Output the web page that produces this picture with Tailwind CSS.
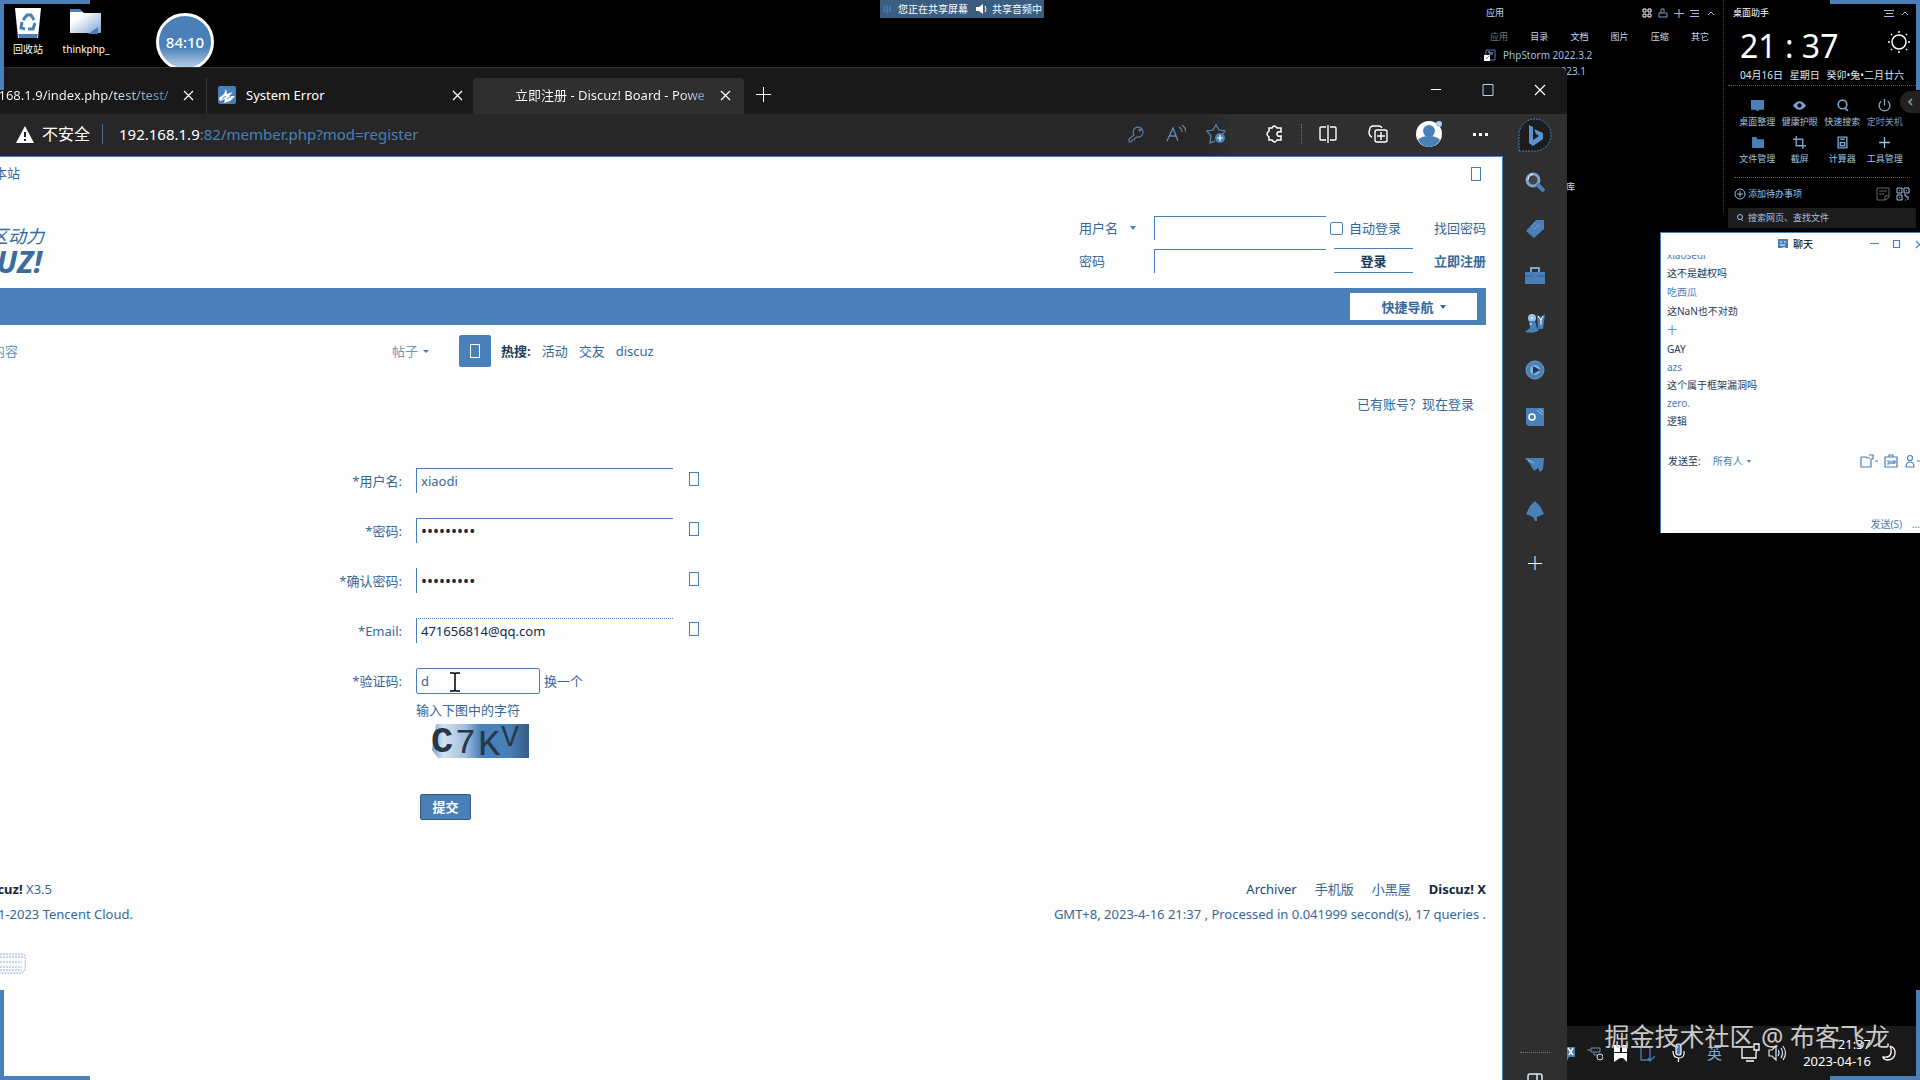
<!DOCTYPE html>
<html lang="zh-CN">

<head>
    <meta charset="UTF-8" />
    <title>立即注册 - Discuz! Board</title>
    <meta name="viewport" content="width=device-width, initial-scale=1.0" />
    <script src="https://cdn.jsdelivr.net/npm/@tailwindcss/browser@4"></script>
    <style>
        html {
            font-family: "Noto Sans", "Noto Sans CJK SC", sans-serif;
        }
    </style>
</head>

<body class="relative h-screen overflow-hidden bg-black text-[13px] leading-5 text-white">

    <!-- Desktop icons -->
    <div class="absolute left-2 top-[7px] flex gap-3 text-center text-[10px] leading-4">
        <a href="#" class="flex w-10 flex-col items-center">
            <svg class="h-8 w-7" viewBox="0 0 28 32">
                <path d="M1 1h26l-3 30H4z" fill="#fff" />
                <path d="M4 27h20l-1 4H5z" fill="#4a80b8" />
                <path d="M9 13l4-5h4l3 5M21 16l-2 6h-5M11 22l-4-1 1-6" fill="none" stroke="#4a80b8" stroke-width="3" />
            </svg>
            <span class="mt-[2px]">回收站</span>
        </a>
        <a href="#" class="flex w-[52px] flex-col items-center">
            <svg class="h-8 w-8" viewBox="0 0 32 32">
                <defs>
                    <linearGradient id="folder" x1="0" y1="0" x2="1" y2="1">
                        <stop offset=".3" stop-color="#fff" />
                        <stop offset="1" stop-color="#7ba3cd" />
                    </linearGradient>
                </defs>
                <path d="M0 3h10l4 3h17v20H0z" fill="url(#folder)" />
                <path d="M0 2h10l3 3H0zM28 20v7H18z" fill="#4a80b8" />
            </svg>
            <span class="mt-[2px]">thinkphp_</span>
        </a>
    </div>

    <!-- Meeting timer -->
    <div class="absolute left-[156px] top-[13px] flex h-[58px] w-[58px] items-center justify-center rounded-full border-3 border-white bg-linear-to-b from-[#4a80b8] from-60% to-[#b9cfe5] text-[15px] font-medium">
        84:10
    </div>

    <!-- Screen sharing status -->
    <div class="absolute left-[880px] top-0 flex h-[18px] w-[164px] items-center justify-center gap-1 bg-[#3b5d80] text-[10px] leading-4">
        <svg class="h-3 w-3" viewBox="0 0 12 12" stroke="#4a90d8" stroke-width="1"><path d="M2 3v6M5 2v8M8 3v6" /></svg>
        <span>您正在共享屏幕</span>
        <svg class="ml-1 h-3 w-3" viewBox="0 0 12 12" fill="#fff"><path d="M0 4h3l4-3v10l-4-3H0z" /><path d="M9 3q2 3 0 6" fill="none" stroke="#fff" /></svg>
        <span>共享音频中</span>
    </div>

    <!-- Launcher panel -->
    <section class="absolute right-[196px] top-0 flex h-[213px] w-[242px] flex-col border-r border-dotted border-[#444] pr-[6px] text-[9px] leading-4 text-[#c5d8ec]">
        <div class="mt-[5px] flex items-center justify-between pl-1">
            <span>应用</span>
            <div class="flex gap-1">
                <svg class="h-3 w-3" viewBox="0 0 12 12" fill="none" stroke="#fff"><path d="M2 2h3v3H2zM7 2h3v3H7zM2 7h3v3H2zM7 7h3v3H7z" /></svg>
                <svg class="h-3 w-3" viewBox="0 0 12 12" fill="none" stroke="#7ba3cd"><path d="M2 6h8v4H2zM4 6V2h3v3" /></svg>
                <svg class="h-3 w-3" viewBox="0 0 12 12" stroke="#9ec0e0"><path d="M6 2v9M1 6.500h10" /></svg>
                <svg class="h-3 w-3" viewBox="0 0 12 12" stroke="#9ec0e0"><path d="M1 3.500h9M3 6.500h7M1 9.500h9" /></svg>
                <svg class="h-3 w-3" viewBox="0 0 12 12" fill="none" stroke="#9ec0e0"><path d="M3 8l3-3 3 3" /></svg>
            </div>
        </div>
        <nav class="mt-2 flex justify-between pl-2 pr-2">
            <a href="#" class="text-[#777]">应用</a>
            <a href="#">目录</a>
            <a href="#">文档</a>
            <a href="#">图片</a>
            <a href="#">压缩</a>
            <a href="#">其它</a>
        </nav>
        <div class="mt-[2px] flex items-center gap-[7px] pl-[2px] text-[10px] text-[#9ec0e0]">
            <svg class="h-3 w-3" viewBox="0 0 12 12"><path d="M2 1h9v10H2z" fill="none" stroke="#4a80b8" /><path d="M4 3h2v3M8 3v3" stroke="#9ec0e0" /><path d="M0 6h6v6H0z" fill="#fff" /><path d="M2 10l3-3" stroke="#4a80b8" /></svg>
            <span>PhpStorm 2022.3.2</span>
        </div>
        <div class="w-[104px] text-right text-[10px] text-[#9ec0e0]">2023.1</div>
        <div class="mt-[100px] pl-[84px]">库</div>
    </section>

    <!-- Desktop assistant -->
    <section class="absolute right-1 top-0 flex w-[188px] flex-col text-[9px] leading-4 text-[#9ec0e0]">
        <div class="mt-[5px] flex items-center justify-between px-[5px]">
            <span class="text-white">桌面助手</span>
            <div class="flex gap-1">
                <svg class="h-3 w-3" viewBox="0 0 12 12" stroke="#9ec0e0"><path d="M1 3.500h10M3 6.500h7M1 9.500h10" /></svg>
                <svg class="h-3 w-3" viewBox="0 0 12 12" fill="none" stroke="#9ec0e0"><path d="M3 8l3-3 3 3" /></svg>
            </div>
        </div>
        <div class="mt-1 flex items-center justify-between pl-3 pr-[5px] text-white">
            <span class="text-[32px] leading-[42px]">21 : 37</span>
            <svg class="mb-2 h-6 w-6" viewBox="0 0 24 24" fill="none" stroke="#fff" stroke-width="1.500">
                <circle cx="12" cy="12" r="7" />
                <path d="M12 1v2M12 21v2M1 12h2M21 12h2M4 4l1 1M19 19l1 1M4 20l1-1M19 5l1-1" />
            </svg>
        </div>
        <div class="flex justify-between border-b border-dotted border-[#555] pb-[2px] pl-3 pr-3 text-[10px] text-[#dbe7f3]">
            <span>04月16日</span><span>星期日</span><span>癸卯•兔•二月廿六</span>
        </div>
        <div class="grid grid-cols-4 gap-y-[6px] pl-2 pr-[10px] pt-[13px] text-center">
            <a href="#" class="flex flex-col items-center gap-[2px] whitespace-nowrap text-[#9ec0e0]">
                <svg class="h-[13px] w-[13px]" viewBox="0 0 12 12"><path d="M0 1h12v9H7v1H5v-1H0z" fill="#4a80b8" /></svg>桌面整理
            </a>
            <a href="#" class="flex flex-col items-center gap-[2px] whitespace-nowrap text-[#9ec0e0]">
                <svg class="h-[13px] w-[13px]" viewBox="0 0 12 12"><path d="M0 6q6-8 12 0q-6 8-12 0" fill="#7ba3cd" /><circle cx="6" cy="6" r="2" fill="#000" /></svg>健康护眼
            </a>
            <a href="#" class="flex flex-col items-center gap-[2px] whitespace-nowrap text-[#9ec0e0]">
                <svg class="h-[13px] w-[13px]" viewBox="0 0 12 12" fill="none" stroke="#7ba3cd" stroke-width="1.500"><circle cx="6" cy="5" r="4" /><path d="M8 8l3 3" /></svg>快速搜索
            </a>
            <a href="#" class="flex flex-col items-center gap-[2px] whitespace-nowrap text-[#7f97b0]">
                <svg class="h-[13px] w-[13px]" viewBox="0 0 12 12" fill="none" stroke="#8da9c5" stroke-width="1.200"><path d="M3 2a5 5 0 1 0 6 0M6 0v6" /></svg>定时关机
            </a>
            <a href="#" class="flex flex-col items-center gap-[2px] whitespace-nowrap text-[#9ec0e0]">
                <svg class="h-[13px] w-[13px]" viewBox="0 0 12 12"><path d="M1 1h4l1 2h6v8H1z" fill="#4a80b8" /></svg>文件管理
            </a>
            <a href="#" class="flex flex-col items-center gap-[2px] whitespace-nowrap text-[#9ec0e0]">
                <svg class="h-[13px] w-[13px]" viewBox="0 0 12 12" fill="none" stroke="#7ba3cd" stroke-width="1.300"><path d="M3 0v9h9M0 3h9v9" /></svg>截屏
            </a>
            <a href="#" class="flex flex-col items-center gap-[2px] whitespace-nowrap text-[#9ec0e0]">
                <svg class="h-[13px] w-[13px]" viewBox="0 0 12 12" fill="none" stroke="#7ba3cd" stroke-width="1.300"><path d="M2 1h8v10H2zM4 3h4M4 6h4v3H4z" /></svg>计算器
            </a>
            <a href="#" class="flex flex-col items-center gap-[2px] whitespace-nowrap text-[#9ec0e0]">
                <svg class="h-[13px] w-[13px]" viewBox="0 0 12 12" stroke="#9ec0e0" stroke-width="1.200"><path d="M6 1v10M1 6h10" /></svg>工具管理
            </a>
        </div>
        <div class="mx-[6px] mt-[10px] flex items-center gap-[2px] border-t border-dotted border-[#555] pt-2">
            <svg class="h-3 w-3" viewBox="0 0 12 12" fill="none" stroke="#9ec0e0"><circle cx="6" cy="6" r="5" /><path d="M6 3v6M3 6h6" /></svg>
            <span class="flex-1">添加待办事项</span>
            <svg class="mr-1 h-[14px] w-[14px]" viewBox="0 0 14 14" fill="none" stroke="#666"><path d="M1 1h12v9l-3 3H1zM3 4h8M3 7h5M9 13V9h4" /></svg>
            <svg class="h-[14px] w-[14px]" viewBox="0 0 14 14" fill="none" stroke="#9ec0e0"><path d="M1 1h5v5H1zM8 1h5v5H8zM1 8h5v5H1zM8 8h2v2h3M9 13h1M12 11v2M3 3.500h1M10 3.500h1M3 10.500h1" /></svg>
        </div>
        <label class="mt-[6px] flex h-5 items-center gap-1 bg-[#1d1d1d] pl-2">
            <svg class="h-2 w-2" viewBox="0 0 8 8" fill="none" stroke="#9ec0e0"><circle cx="4" cy="3" r="2.500" /><path d="M5 5l2 2" /></svg>
            <input type="text" aria-label="搜索" placeholder="搜索网页、查找文件" class="w-36 outline-none placeholder:text-[#9ec0e0]" />
        </label>
    </section>
    <button aria-label="收起" class="absolute right-0 top-[91px] flex h-[22px] w-5 items-center justify-center rounded-l-full bg-[#222]">
        <svg class="h-2 w-2" viewBox="0 0 8 8" fill="none" stroke="#7ba3cd" stroke-width="1.500"><path d="M6 1L3 4l3 3" /></svg>
    </button>

    <!-- Chat window -->
    <section class="absolute right-0 top-[232px] h-[301px] w-[260px] overflow-hidden border-l border-t border-[#4a80b8] bg-[#fdfdfd] text-[10px] leading-[18px] text-[#1d3a58]">
        <header class="flex h-[22px] items-center">
            <svg class="ml-[117px] h-[10px] w-[10px]" viewBox="0 0 10 10"><path d="M0 0h10v9H8L6 8 4 9H0z" fill="#4a80b8" /><path d="M2 3h2M6 3h2M2 6h5" stroke="#fff" /></svg>
            <span class="ml-[5px] text-black">聊天</span>
            <svg class="ml-auto h-3 w-[50px] shrink-0" viewBox="0 0 50 12" fill="none" stroke="#4a80b8" stroke-width="1.200"><path d="M0 5.500h9M23.500 2.500h6v7h-6zM46 3l7 7M53 3l-7 7" /></svg>
        </header>
        <ul class="pl-[6px]">
            <li class="flex h-1 items-end overflow-hidden leading-2 text-[#4a80b8]">xiaosedi</li>
            <li class="mt-[5px]">这不是越权吗</li>
            <li class="mt-[1px] text-[#4a80b8]">吃西瓜</li>
            <li class="mt-[1px]">这NaN也不对劲</li>
            <li class="mt-[1px] text-[#4a80b8]">十</li>
            <li class="mt-[1px]">GAY</li>
            <li class="text-[#4a80b8]">azs</li>
            <li>这个属于框架漏洞吗</li>
            <li class="text-[#4a80b8]">zero.</li>
            <li>逻辑</li>
        </ul>
        <div class="mt-[22px] flex items-center pl-[7px]">
            <label for="sendTo">发送至:</label>
            <select id="sendTo" class="ml-3 appearance-none text-[#4a80b8]">
                <option>所有人</option>
            </select>
            <span class="ml-1 border-x-2 border-t-3 border-x-transparent border-t-[#4a80b8]"></span>
            <svg class="ml-auto h-[14px] w-[60px] shrink-0" viewBox="0 0 60 14" fill="none" stroke="#4a80b8" stroke-width="1.200">
                <path d="M1 3h5l1 1h3M11 6v7H1V3M9 1h4v4h-2v2M15 7h3" />
                <path d="M25 3h12v10H25zM29 3V1h4v2M27 7h2v3h-2M31 7v3M33 10V7h2v2h-2" />
                <circle cx="50" cy="4" r="2.500" /><path d="M46 13q0-5 4-5t4 5zM57 7h3" />
            </svg>
        </div>
        <div class="mt-[45px] flex justify-end gap-[10px] text-[#4a80b8]">
            <button>发送(S)</button><span>…</span>
        </div>
    </section>

    <!-- Browser window -->
    <div class="absolute bottom-0 left-0 right-[353px] top-[67px] flex flex-col overflow-hidden rounded-tr-lg border-t border-[#2f2f2f] bg-[#2f2f2f]">
        <div class="flex h-[46px] shrink-0 items-end bg-[#191919]">
            <div class="flex h-9 w-[206px] items-center justify-between pb-[2px] pr-[12px]">
                <span class="-ml-[5px] whitespace-nowrap bg-linear-to-r from-white from-60% to-[#4a80b8] bg-clip-text text-transparent">.168.1.9/index.php/test/test/</span>
                <button aria-label="关闭标签页"><svg class="h-[11px] w-[11px]" viewBox="0 0 11 11" stroke="#fff" stroke-width="1.200"><path d="M1 1l9 9M10 1l-9 9" /></svg></button>
            </div>
            <div class="flex h-9 w-[267px] items-center border-l border-[#3a3a3a] pb-[2px] pl-[11px] pr-[10px]">
                <svg class="h-[18px] w-[18px]" viewBox="0 0 18 18"><rect width="18" height="18" rx="2" fill="#4a80b8" /><path d="M1 12l5-4 2-5 1 5 6-2-4 4 6 0-5 5-6 2 1-4-5 2z" fill="#fff" /><path d="M4 13l4-3M9 13l4-3" stroke="#4a80b8" /></svg>
                <span class="ml-[10px] flex-1">System Error</span>
                <button aria-label="关闭标签页"><svg class="h-[11px] w-[11px]" viewBox="0 0 11 11" stroke="#fff" stroke-width="1.200"><path d="M1 1l9 9M10 1l-9 9" /></svg></button>
            </div>
            <div class="flex h-9 w-[271px] items-center rounded-t bg-[#2f2f2f] pb-[2px] pl-[42px] pr-[13px]">
                <span class="w-[194px] overflow-hidden whitespace-nowrap bg-linear-to-r from-white from-85% to-[#4a80b8] bg-clip-text text-transparent">立即注册 - Discuz! Board - Powe</span>
                <button aria-label="关闭标签页" class="ml-auto"><svg class="h-[11px] w-[11px]" viewBox="0 0 11 11" stroke="#fff" stroke-width="1.200"><path d="M1 1l9 9M10 1l-9 9" /></svg></button>
            </div>
            <button aria-label="新建标签页" class="mb-3 ml-3"><svg class="h-[15px] w-[15px]" viewBox="0 0 15 15" stroke="#fff"><path d="M7.500 0v15M0 7.500h15" /></svg></button>
            <div class="mb-[18px] ml-auto flex gap-10 pr-[21px]">
                <button aria-label="最小化"><svg class="h-3 w-3" viewBox="0 0 12 12" stroke="#fff"><path d="M1 5.500h10" /></svg></button>
                <button aria-label="最大化"><svg class="h-3 w-3" viewBox="0 0 12 12" fill="none" stroke="#b9d0e8"><path d="M1 .5h10v11H1z" /></svg></button>
                <button aria-label="关闭"><svg class="h-3 w-3" viewBox="0 0 12 12" stroke="#fff" stroke-width="1.200"><path d="M1 1l10 10M11 1L1 11" /></svg></button>
            </div>
        </div>

        <div class="flex min-h-0 flex-1">
            <div class="flex min-w-0 flex-1 flex-col">
                <!-- Address bar -->
                <div class="flex h-[42px] shrink-0 items-center bg-linear-to-r from-[#272727] from-80% to-[#2f2f2f] to-82% pb-[2px] pr-[14px] text-[15px]">
                    <svg class="ml-4 h-[17px] w-[18px]" viewBox="0 0 18 17"><path d="M9 0l9 17H0z" fill="#fff" /><path d="M9 6v5M9 13v2" stroke="#222" stroke-width="2" /></svg>
                    <span class="ml-2 text-[16px]">不安全</span>
                    <span class="ml-3 h-5 w-px bg-[#4a6f96]"></span>
                    <span class="ml-4 flex-1">192.168.1.9<span class="text-[#4a80b8]">:82/member.php?mod=register</span></span>
                    <svg class="h-5 w-5" viewBox="0 0 20 20" fill="none" stroke="#5f7f9f" stroke-width="1.200"><path d="M8 11a5 5 0 1 1 3 2l-2 1-1 2H6l-1 2H3v-3z" /><circle cx="14" cy="6" r="1" /></svg>
                    <svg class="ml-5 h-5 w-5" viewBox="0 0 20 20" fill="none" stroke="#6389b0" stroke-width="1.300"><path d="M1 17L7 4l5 13M3 12h7M13 3q3 2 3 5M16 1q4 3 4 7" /></svg>
                    <svg class="ml-5 h-5 w-5" viewBox="0 0 20 20" fill="none" stroke="#5b8bbd" stroke-width="1.200"><path d="M9 17l-5 2 1-7-4-5 6-1 3-5 3 5 6 1-2 3" /><circle cx="14" cy="14" r="5" fill="#4a80b8" stroke="none" /><path d="M14 11v6M11 14h6" stroke="#fff" /></svg>
                    <svg class="ml-[39px] h-5 w-5" viewBox="0 0 20 20" fill="none" stroke="#fff" stroke-width="1.500"><path d="M4 4h3q2-4 5 0h4v4q-4-1-4 2t4 2v4h-4q-2 4-5 0H4v-3q-4-3 0-6z" /></svg>
                    <span class="ml-4 h-5 border-l border-dotted border-[#4a80b8]"></span>
                    <svg class="ml-4 h-5 w-5" viewBox="0 0 20 20" fill="none" stroke="#fff" stroke-width="1.400"><path d="M8 3H3q-1 0-1 1v11q0 1 1 1h5M12 3h5q1 0 1 1v11q0 1-1 1h-5M10 1v18" /></svg>
                    <svg class="ml-[30px] h-5 w-5" viewBox="0 0 20 20" fill="none" stroke="#fff" stroke-width="1.400"><path d="M4 13q-3-1-3-5l1-4q1-2 3-2h6q2 0 3 2" /><rect x="7" y="6" width="12" height="12" rx="2" /><path d="M13 8v8M9 12h8" /></svg>
                    <svg class="ml-7 h-[26px] w-[26px]" viewBox="0 0 26 26"><circle cx="13" cy="13" r="13" fill="#fff" /><path d="M2 19q3-4 11-4t11 4q-4 7-11 7T2 19" fill="#4a80b8" /><circle cx="13" cy="10" r="6" fill="#4a80b8" /><circle cx="23" cy="3" r="3" fill="#b9d0e8" /></svg>
                    <svg class="ml-[31px] h-4 w-4" viewBox="0 0 16 16" fill="#fff"><path d="M0 7h3v3H0zM6 7h3v3H6zM12 7h3v3h-3z" /></svg>
                </div>

                <!-- Page -->
                <main class="flex flex-1 flex-col overflow-hidden border-r border-t border-[#4a80b8] bg-[#fdfdfd] pr-4 text-[#35689b]">
                    <div class="flex h-[34px] items-center justify-between pb-[2px]">
                        <span class="flex w-5 justify-end whitespace-nowrap">收藏本站</span>
                        <span class="mr-[5px] mt-[2px] h-[14px] w-[10px] border border-[#4a80b8]"></span>
                    </div>

                    <div class="flex h-[97px] justify-between">
                        <div class="flex w-11 flex-col items-end whitespace-nowrap pt-[31px]">
                            <span class="text-[18px] italic leading-7">社区动力</span>
                            <span class="mr-[2px] text-[30px] font-bold italic leading-6 text-[#3b6c9e]">DISCUZ!</span>
                        </div>
                        <form class="mt-[25px] grid h-14 grid-cols-[75px_172px_81px_auto] items-center gap-y-2">
                            <label for="lsUser" class="flex items-center gap-3">用户名 <span class="border-x-3 border-t-4 border-x-transparent border-t-[#4a80b8]"></span></label>
                            <input id="lsUser" type="text" class="h-6 border-l border-t border-[#4a80b8] px-1 outline-none" />
                            <label class="flex items-center gap-[6px] whitespace-nowrap pl-1"><input type="checkbox" class="h-[13px] w-[13px] appearance-none rounded-xs border border-[#4a80b8]" />自动登录</label>
                            <a href="#" class="pl-[27px]">找回密码</a>
                            <label for="lsPass">密码</label>
                            <input id="lsPass" type="password" class="h-6 border-l border-t border-[#4a80b8] px-1 outline-none" />
                            <button type="button" class="ml-2 h-[25px] w-[79px] border-y border-[#4a80b8] font-bold text-[#1d3a58]">登录</button>
                            <a href="#" class="pl-[27px] font-bold">立即注册</a>
                        </form>
                    </div>

                    <nav class="flex h-[37px] items-center justify-end bg-[#4a80b8] pr-[9px]">
                        <button class="flex h-[27px] w-[127px] items-center justify-center gap-[6px] bg-[#fdfdfd] font-bold">快捷导航 <span class="border-x-3 border-t-4 border-x-transparent border-t-[#35689b]"></span></button>
                    </nav>

                    <div class="mt-[10px] flex h-8 items-center">
                        <span class="flex w-[18px] justify-end whitespace-nowrap text-[#6c97c4]">搜索内容</span>
                        <span class="ml-[374px] flex w-[67px] items-center gap-[5px] text-[#6c97c4]">帖子 <span class="border-x-3 border-t-3 border-x-transparent border-t-[#4a80b8]"></span></span>
                        <button aria-label="搜索" class="flex h-8 w-8 items-center justify-center rounded-xs bg-[#4a80b8]"><span class="h-[14px] w-[10px] border border-white"></span></button>
                        <b class="ml-[10px] text-[#1d3a58]">热搜:</b>
                        <a href="#" class="ml-[11px]">活动</a>
                        <a href="#" class="ml-[11px]">交友</a>
                        <a href="#" class="ml-[11px]">discuz</a>
                    </div>

                    <div class="mr-3 mt-[27px] text-right">已有账号？<a href="#">现在登录</a></div>

                    <form class="mt-[54px] grid grid-cols-[402px_auto] justify-start gap-x-[14px] gap-y-[25px]">
                        <label for="user" class="self-center text-right">*用户名:</label>
                        <div class="flex gap-4">
                            <input id="user" type="text" value="xiaodi" class="h-[25px] w-[257px] border-l border-t border-[#4a80b8] px-1 outline-none" />
                            <span class="mt-1 h-[14px] w-[10px] border border-[#4a80b8]"></span>
                        </div>
                        <label for="pass" class="self-center text-right">*密码:</label>
                        <div class="flex gap-4">
                            <input id="pass" type="password" value="123456789" class="h-[25px] w-[257px] border-l border-t border-[#4a80b8] px-1 text-[16px] text-[#1b2c3d] outline-none" />
                            <span class="mt-1 h-[14px] w-[10px] border border-[#4a80b8]"></span>
                        </div>
                        <label for="pass2" class="self-center text-right">*确认密码:</label>
                        <div class="flex gap-4">
                            <input id="pass2" type="password" value="123456789" class="h-[25px] w-[257px] border-l border-[#4a80b8] px-1 text-[16px] text-[#1b2c3d] outline-none" />
                            <span class="mt-1 h-[14px] w-[10px] border border-[#4a80b8]"></span>
                        </div>
                        <label for="email" class="self-center text-right">*Email:</label>
                        <div class="flex gap-4">
                            <input id="email" type="text" value="471656814@qq.com" class="h-[25px] w-[257px] border-l border-t border-[#4a80b8] [border-top-style:dotted] px-1 text-[#152a3f] outline-none" />
                            <span class="mt-1 h-[14px] w-[10px] border border-[#4a80b8]"></span>
                        </div>
                        <label for="code" class="pt-[3px] text-right">*验证码:</label>
                        <div>
                            <div class="relative flex items-center gap-1">
                                <input id="code" type="text" value="d" class="h-[26px] w-[124px] rounded-xs border border-[#4a80b8] px-1 outline-none" />
                                <a href="#">换一个</a>
                                <svg class="absolute left-[33px] top-1 h-5 w-3" viewBox="0 0 12 20" fill="none" stroke="#000" stroke-width="1.500"><path d="M1 1h4l1 1 1-1h4M1 19h4l1-1 1 1h4M6 2v16" /></svg>
                            </div>
                            <p class="mt-[6px]">输入下图中的字符</p>
                            <svg class="ml-[14px] mt-1 h-[34px] w-[99px]" viewBox="0 0 99 34">
                                <defs>
                                    <linearGradient id="captcha">
                                        <stop offset="0" stop-color="#7ba3cd" />
                                        <stop offset=".12" stop-color="#d5e2ef" />
                                        <stop offset=".35" stop-color="#9fbcdb" />
                                        <stop offset=".5" stop-color="#4a80b8" />
                                        <stop offset=".8" stop-color="#4a80b8" />
                                        <stop offset="1" stop-color="#355b82" />
                                    </linearGradient>
                                </defs>
                                <path d="M6 0h93v34H8l-6-8z" fill="url(#captcha)" />
                                <g fill="#263848" font-family="Liberation Mono">
                                    <text x="1" y="28" font-size="37" font-weight="bold">C</text>
                                    <text x="25" y="29" font-size="35">7</text>
                                    <text x="48" y="31" font-size="37">K</text>
                                    <text x="71" y="22" font-size="30">V</text>
                                </g>
                            </svg>
                            <button type="button" class="ml-1 mt-9 block h-[26px] w-[51px] rounded-xs border border-[#355b82] bg-[#4a80b8] font-bold text-white">提交</button>
                        </div>
                    </form>

                    <footer class="mt-[57px] flex justify-between leading-[25px]">
                        <div class="flex w-[133px] flex-col items-end whitespace-nowrap">
                            <p class="mr-[81px]"><b class="text-[#152a3f]">Powered by Discuz!</b> X3.5</p>
                            <p>© 2001-2023 Tencent Cloud.</p>
                        </div>
                        <div class="text-right">
                            <p class="flex justify-end gap-[18px]"><a href="#" class="text-[#24496e]">Archiver</a><a href="#">手机版</a><a href="#">小黑屋</a><b class="text-[#152a3f]">Discuz! X</b></p>
                            <p>GMT+8, 2023-4-16 21:37 , Processed in 0.041999 second(s), 17 queries .</p>
                        </div>
                    </footer>
                    <svg class="mt-[26px] h-[22px] w-[26px] shrink-0" viewBox="0 0 26 22" fill="none" stroke="#8db0d4" stroke-dasharray="2 1"><path d="M0 1h24q2 2 1 16l-3 3H0M0 4h24M0 9h22M0 14h22M0 17h22" /></svg>
                </main>
            </div>

            <!-- Edge sidebar -->
            <aside class="flex w-16 shrink-0 flex-col items-center pt-1">
                <svg class="h-[34px] w-[34px]" viewBox="0 0 34 34"><path d="M1 33V17A16 16 0 1 1 17 33z" fill="#1c1c1c" stroke="#4a80b8" stroke-dasharray="2 1" /><path d="M11 7l4 2v13l6-4-3-2-2-5 9 4v6l-10 7-4-3z" fill="#5b93cf" /></svg>
                <div class="mt-5 flex flex-col items-center gap-[27px]">
                    <svg class="h-5 w-5" viewBox="0 0 20 20"><circle cx="8" cy="8" r="6" fill="#444" stroke="#7ba3cd" stroke-width="3" /><path d="M3 8q0-5 5-6" fill="none" stroke="#fff" /><path d="M12 12l7 7" stroke="#4a80b8" stroke-width="4" /></svg>
                    <svg class="h-5 w-5" viewBox="0 0 20 20"><path d="M1 12L11 1l8 0v9L9 19z" fill="#4a80b8" /><path d="M6 8l4-4M9 10l6-5" stroke="#9ec0e0" stroke-dasharray="1 1" /></svg>
                    <svg class="h-5 w-5" viewBox="0 0 20 20"><path d="M6 6V2h8v4" fill="none" stroke="#7ba3cd" stroke-width="2" /><path d="M0 6h20v12H0z" fill="#4a80b8" /><path d="M0 10h8M12 10h8" stroke="#2f5f92" /></svg>
                    <svg class="h-5 w-5" viewBox="0 0 20 20"><path d="M12 2l4 2 4-3-2 15h-5z" fill="#4a80b8" /><circle cx="7" cy="5" r="4" fill="#9ec0e0" /><path d="M4 8h6l2 7 2 2q-4 4-14 2l5-4z" fill="#4a80b8" /><path d="M13 3l3 4 2-4M16 7v5M6 5h2M6 10v2" stroke="#fff" fill="none" /></svg>
                    <svg class="h-5 w-5" viewBox="0 0 20 20"><circle cx="10" cy="10" r="9" fill="#4a80b8" stroke="#6fa0d2" /><circle cx="10" cy="10" r="5" fill="#8db0d4" /><path d="M8 6l7 4-7 4z" fill="#1d3a58" /></svg>
                    <svg class="h-5 w-5" viewBox="0 0 20 20"><path d="M1 1h18v18H3l-2-2z" fill="#4a80b8" /><circle cx="7" cy="10" r="3" fill="none" stroke="#fff" stroke-width="1.500" /><path d="M12 3l6 5M15 2l3 3" stroke="#9ec0e0" /></svg>
                    <svg class="h-5 w-5" viewBox="0 0 20 20"><path d="M0 4h19l-1 11-3 3-2-4-4 3-4-7z" fill="#4a80b8" /><path d="M3 6l6 3" stroke="#9ec0e0" /></svg>
                    <svg class="h-5 w-5" viewBox="0 0 20 20"><path d="M10 0l5 5 4 8-7 3v4h-2l-2-4-7-3 4-8z" fill="#4a80b8" /></svg>
                    <svg class="mt-2 h-[14px] w-[14px]" viewBox="0 0 14 14" stroke="#fff"><path d="M7 0v14" stroke="#6fa0d2" stroke-width="2" /><path d="M0 7.500h14" /></svg>
                </div>
                <div class="mt-auto w-[30px] border-t border-dotted border-[#4a80b8]"></div>
                <svg class="mt-5 h-[7px] w-4 shrink-0" viewBox="0 0 16 7" fill="none" stroke="#dbe7f3" stroke-width="1.500"><path d="M1 7V3q0-2 2-2h10q2 0 2 2v4M10 1v6" /></svg>
            </aside>
        </div>
    </div>

    <!-- Taskbar tray -->
    <div class="absolute bottom-0 right-0 flex h-[54px] w-[353px] items-center bg-[#191919] pr-[23px] text-[12px] leading-[17px]">
        <svg class="h-5 w-[10px]" viewBox="0 0 10 20"><path d="M0 4h8v10H2l-2 4z" fill="#4a80b8" /><path d="M1 5l5 7M6 5l-4 7" stroke="#fff" stroke-width="1.500" /></svg>
        <svg class="ml-[10px] h-5 w-4" viewBox="0 0 16 20" fill="none" stroke="#6c8fb3"><path d="M0 7h4M4 5h9v4H4zM7 9v3h3" /><circle cx="13" cy="14" r="3" stroke="#dbe7f3" /></svg>
        <svg class="ml-[10px] h-5 w-4" viewBox="0 0 16 20" fill="#fff"><path d="M1 2h6v7H1zM9 2h5v7H9zM1 10h13v9l-4-4-3 0-6 4z" /></svg>
        <svg class="ml-[10px] h-5 w-4" viewBox="0 0 16 20" fill="none" stroke="#4a80b8" stroke-width="1.300"><path d="M2 4h9v13H2zM9 15l2 3 5-5" /></svg>
        <svg class="ml-4 h-5 w-4" viewBox="0 0 16 20" fill="none" stroke="#fff" stroke-width="1.200"><rect x="5" y="1" width="5" height="11" rx="2" fill="#4a80b8" /><path d="M2 8q0 7 6 7t5-7M7.500 15v4" /></svg>
        <span class="ml-5 text-[15px] text-[#7fa9d6]">英</span>
        <svg class="ml-[19px] h-5 w-[19px]" viewBox="0 0 19 20" fill="none" stroke="#fff" stroke-width="1.300"><path d="M11 4H1v11h14V9M5 18h8M13 1h5v6h-5zM15.500 7v2" /></svg>
        <svg class="ml-2 h-5 w-[19px]" viewBox="0 0 19 20" fill="none" stroke="#dbe7f3" stroke-width="1.200"><path d="M1 7h3l4-4v14l-4-4H1zM10 7q2 3 0 6M13 5q3 5 0 10M15 3q5 7 0 14" /></svg>
        <div class="ml-auto text-right text-[13px]">
            <div>21:37</div>
            <div>2023-04-16</div>
        </div>
        <svg class="ml-[10px] h-4 w-4" viewBox="0 0 16 16" fill="none" stroke="#fff" stroke-width="1.300"><path d="M9 1q6 2 5 8t-8 6q-4-1-4-3 7 1 8-4 1-4-1-7" /></svg>
    </div>
    <div class="absolute bottom-[26px] right-[30px] whitespace-nowrap text-[25px] leading-9 text-[#c9c9c9]">掘金技术社区 @ 布客飞龙</div>

    <!-- Shared region corners -->
    <div class="absolute left-0 top-0 h-[90px] w-[90px] border-l-4 border-t-4 border-[#4a80b8]"></div>
    <div class="absolute right-0 top-0 h-[90px] w-[90px] border-r-4 border-t-4 border-[#4a80b8]"></div>
    <div class="absolute bottom-0 left-0 h-[90px] w-[90px] border-b-4 border-l-4 border-[#4a80b8]"></div>
    <div class="absolute bottom-0 right-0 h-[90px] w-[90px] border-b-4 border-r-4 border-[#4a80b8]"></div>
</body>

</html>
